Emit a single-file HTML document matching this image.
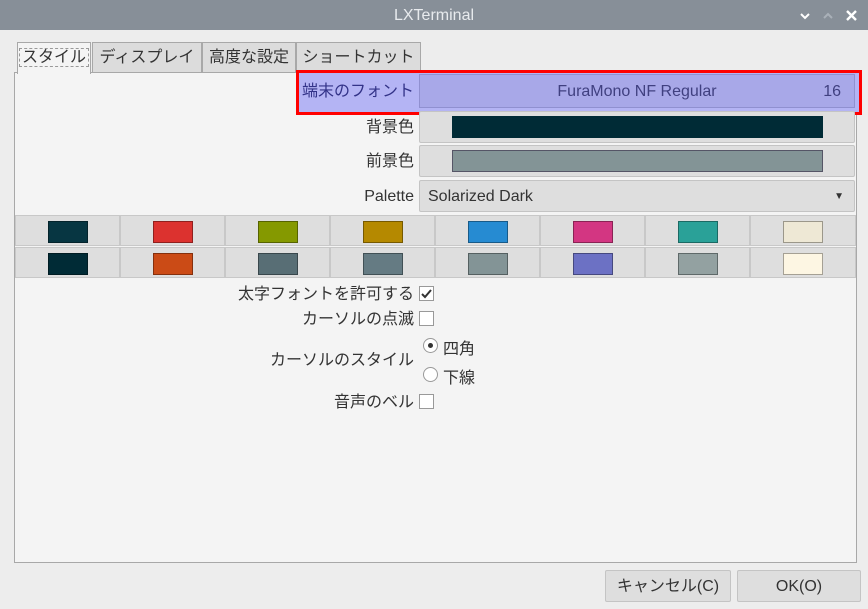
<!DOCTYPE html>
<html><head><meta charset="utf-8"><style>
*{box-sizing:border-box;margin:0;padding:0}
body{width:868px;height:609px;overflow:hidden;background:#ededed;font-family:"Liberation Sans","Noto Sans CJK JP",sans-serif;font-size:15px;color:#333;position:relative}
.a{position:absolute}
.title{left:0;top:0;width:868px;height:30px;background:#878f98;color:#e8ebee;text-align:center;line-height:32px;font-size:16px}
.pane{left:14px;top:72px;width:843px;height:491px;background:#f4f4f4;border:1px solid #a8a8a8}
.tab{top:42px;height:31px;background:#dcdcdc;border:1px solid #a8a8a8;line-height:30px;text-align:center;font-size:16px}
.btn{background:#dedede;border:1px solid #c4c4c4;border-radius:2px}
.lbl{text-align:right;font-size:16px;line-height:20px}
.cell{width:104px;height:31px;background:#dedede;border:1px solid #c8c8c8}
.sw{position:absolute;left:32px;top:5px;width:40px;height:22px;border:1px solid rgba(0,0,0,.35)}
.cb{width:15px;height:15px;border:1px solid #999;background:#fff}
</style></head><body>
<div class="a title">LXTerminal</div>
<svg class="a" style="left:798px;top:8px" width="62" height="16"><path d="M3 6l4 4 4-4" stroke="#fff" stroke-width="2" fill="none"/><path d="M26 10l4-4 4 4" stroke="#a9b0b8" stroke-width="2" fill="none"/><path d="M49 3l9 9M58 3l-9 9" stroke="#fff" stroke-width="2.4"/></svg>
<div class="a pane"></div>
<div class="a tab" style="left:17px;width:74px;background:#f4f4f4;border-bottom:none;height:32px"><span style="border:1px dashed #999;padding:0 2px">スタイル</span></div>
<div class="a tab" style="left:92px;width:110px">ディスプレイ</div>
<div class="a tab" style="left:202px;width:94px">高度な設定</div>
<div class="a tab" style="left:296px;width:125px">ショートカット</div>

<div class="a" style="left:296px;top:70px;width:566px;height:45px;border:3px solid #ff0000"></div>
<div class="a" style="left:299px;top:73px;width:560px;height:39px;background:#b4b4f4"></div>
<div class="a lbl" style="left:299px;top:82px;width:115px;color:#333388">端末のフォント</div>
<div class="a" style="left:419px;top:74px;width:436px;height:34px;background:#a8a8e8;border:1px solid #9090d0;color:#404080;line-height:33px;text-align:center;font-size:16px">FuraMono NF Regular<span style="position:absolute;right:13px">16</span></div>

<div class="a lbl" style="left:300px;top:118px;width:114px">背景色</div>
<div class="a btn" style="left:419px;top:111px;width:436px;height:32px"><div class="a" style="left:32px;top:4px;width:371px;height:22px;background:#002b36"></div></div>
<div class="a lbl" style="left:300px;top:152px;width:114px">前景色</div>
<div class="a btn" style="left:419px;top:145px;width:436px;height:32px"><div class="a" style="left:32px;top:4px;width:371px;height:22px;background:#839496;border:1px solid #556"></div></div>
<div class="a lbl" style="left:300px;top:187px;width:114px">Palette</div>
<div class="a btn" style="left:419px;top:180px;width:436px;height:32px;line-height:31px;padding-left:8px;font-size:16px">Solarized Dark<span style="position:absolute;right:10px;font-size:10px">▼</span></div>

<div class="a" style="left:15px;top:215px;width:841px">
<div style="display:flex">
<div class="cell" style="position:relative;width:105px"><div class="sw" style="background:#073642"></div></div>
<div class="cell" style="position:relative;width:105px"><div class="sw" style="background:#dc322f"></div></div>
<div class="cell" style="position:relative;width:105px"><div class="sw" style="background:#859900"></div></div>
<div class="cell" style="position:relative;width:105px"><div class="sw" style="background:#b58900"></div></div>
<div class="cell" style="position:relative;width:105px"><div class="sw" style="background:#268bd2"></div></div>
<div class="cell" style="position:relative;width:105px"><div class="sw" style="background:#d33682"></div></div>
<div class="cell" style="position:relative;width:105px"><div class="sw" style="background:#2aa198"></div></div>
<div class="cell" style="position:relative;width:106px"><div class="sw" style="background:#eee8d5"></div></div>
</div>
<div style="display:flex;margin-top:1px">
<div class="cell" style="position:relative;width:105px"><div class="sw" style="background:#002b36"></div></div>
<div class="cell" style="position:relative;width:105px"><div class="sw" style="background:#cb4b16"></div></div>
<div class="cell" style="position:relative;width:105px"><div class="sw" style="background:#586e75"></div></div>
<div class="cell" style="position:relative;width:105px"><div class="sw" style="background:#657b83"></div></div>
<div class="cell" style="position:relative;width:105px"><div class="sw" style="background:#839496"></div></div>
<div class="cell" style="position:relative;width:105px"><div class="sw" style="background:#6c71c4"></div></div>
<div class="cell" style="position:relative;width:105px"><div class="sw" style="background:#93a1a1"></div></div>
<div class="cell" style="position:relative;width:106px"><div class="sw" style="background:#fdf6e3"></div></div>
</div></div>

<div class="a lbl" style="left:150px;top:285px;width:264px">太字フォントを許可する</div>
<div class="a cb" style="left:419px;top:286px"><svg width="13" height="13" style="position:absolute;left:0;top:0"><path d="M2 7l3 3 6-7" stroke="#333" stroke-width="2" fill="none"/></svg></div>
<div class="a lbl" style="left:150px;top:310px;width:264px">カーソルの点滅</div>
<div class="a cb" style="left:419px;top:311px"></div>
<div class="a lbl" style="left:150px;top:351px;width:264px">カーソルのスタイル</div>
<div class="a" style="left:423px;top:338px;width:15px;height:15px;border:1px solid #999;border-radius:50%;background:#fff"><div class="a" style="left:4px;top:4px;width:5px;height:5px;border-radius:50%;background:#333"></div></div>
<div class="a" style="left:443px;top:335px;font-size:16px">四角</div>
<div class="a" style="left:423px;top:367px;width:15px;height:15px;border:1px solid #999;border-radius:50%;background:#fff"></div>
<div class="a" style="left:443px;top:364px;font-size:16px">下線</div>
<div class="a lbl" style="left:150px;top:393px;width:264px">音声のベル</div>
<div class="a cb" style="left:419px;top:394px"></div>

<div class="a btn" style="left:605px;top:570px;width:126px;height:32px;line-height:31px;text-align:center;font-size:16px">キャンセル(C)</div>
<div class="a btn" style="left:737px;top:570px;width:124px;height:32px;line-height:31px;text-align:center;font-size:16px">OK(O)</div>
</body></html>
